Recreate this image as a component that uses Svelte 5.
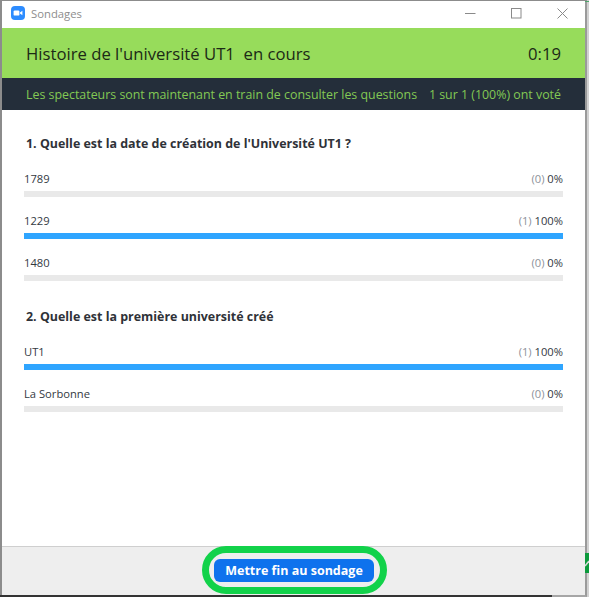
<script>
  const questions = [
    {
      title: "1. Quelle est la date de création de l'Université UT1 ?",
      answers: [
        { label: '1789', count: 0, pct: 0 },
        { label: '1229', count: 1, pct: 100 },
        { label: '1480', count: 0, pct: 0 },
      ],
    },
    {
      title: '2. Quelle est la première université créé',
      answers: [
        { label: 'UT1', count: 1, pct: 100 },
        { label: 'La Sorbonne', count: 0, pct: 0 },
      ],
    },
  ];
</script>

<div class="screen">
  <div class="window">
    <header class="titlebar">
      <svg class="logo" viewBox="0 0 14 14" aria-hidden="true">
        <rect width="14" height="14" rx="4" fill="#2d8cff" />
        <rect x="2.6" y="4.4" width="5.8" height="5.2" rx="1.2" fill="#fff" />
        <path d="M9 6.5 11.4 4.8V9.2L9 7.5Z" fill="#fff" />
      </svg>
      <span class="title">Sondages</span>
      <div class="controls">
        <svg width="11" height="11" viewBox="0 0 11 11" aria-hidden="true"><path d="M0 5.5H10.5" stroke="#8a8a8a" /></svg>
        <svg width="11" height="11" viewBox="0 0 11 11" aria-hidden="true"><rect x=".5" y=".5" width="9.5" height="9.5" fill="none" stroke="#8a8a8a" /></svg>
        <svg width="11" height="11" viewBox="0 0 11 11" aria-hidden="true"><path d="M.5.5 10.5 10.5M10.5.5 .5 10.5" stroke="#8a8a8a" /></svg>
      </div>
    </header>

    <div class="banner">
      <span>Histoire de l'université UT1&nbsp; en cours</span>
      <span>0:19</span>
    </div>

    <div class="status">
      <span>Les spectateurs sont maintenant en train de consulter les questions</span>
      <span>1 sur 1 (100%) ont voté</span>
    </div>

    <main class="results">
      {#each questions as q}
        <section class="question">
          <h2>{q.title}</h2>
          {#each q.answers as a}
            <div class="answer">
              <div class="row">
                <span>{a.label}</span>
                <span><span class="count">({a.count})</span> {a.pct}%</span>
              </div>
              <div class="track"><div class="fill" style="width: {a.pct}%"></div></div>
            </div>
          {/each}
        </section>
      {/each}
    </main>

    <footer class="footer">
      <div class="ring">
        <button type="button">Mettre fin au sondage</button>
      </div>
    </footer>
  </div>

  <!-- bits of the window behind, showing past the right edge -->
  <div class="behind-top"></div>
  <svg class="behind-side" viewBox="0 0 4 20" aria-hidden="true">
    <rect width="4" height="20" fill="#0c9a3c" />
    <path d="M0 13 4 8" stroke="#d8d8d8" stroke-width="1.6" />
  </svg>
</div>

<style>
  :global(body) {
    margin: 0;
    background: #fff;
  }

  .screen {
    position: relative;
    width: 590px;
    height: 598px;
    overflow: hidden;
    font-family: "Open Sans", "Noto Sans", sans-serif;
  }

  .window {
    position: relative;
    width: 587px;
    height: 597px;
    box-sizing: border-box;
    display: flex;
    flex-direction: column;
    background: #fff;
    border-top: 1px solid #8c8c8c;
    border-left: 2px solid #8c8c8c;
    border-right: 2px solid #9a9a9a;
    border-bottom: 2px solid #a6a6a6;
    box-shadow: 2px 0 0 #d2d2d2;
  }

  .window::after {
    content: "";
    position: absolute;
    left: -2px;
    bottom: -2px;
    width: 552px;
    height: 2px;
    background: #333;
  }

  .behind-top {
    position: absolute;
    top: 1px;
    left: 585px;
    width: 4px;
    height: 1px;
    background: #4fa56c;
  }

  .behind-side {
    position: absolute;
    top: 553px;
    left: 585px;
    width: 4px;
    height: 20px;
  }

  .titlebar {
    height: 27px;
    flex: none;
    box-sizing: border-box;
    display: flex;
    align-items: center;
    padding: 0 0 3px 9px;
    background: #fff;
  }

  .logo {
    width: 14px;
    height: 14px;
    margin-right: 6px;
  }

  .title {
    font-size: 11.3px;
    color: #8d8d8d;
  }

  .controls {
    margin-left: auto;
    margin-right: 17px;
    display: flex;
    align-items: center;
    gap: 35px;
  }

  .banner {
    height: 50px;
    flex: none;
    box-sizing: border-box;
    display: flex;
    align-items: center;
    justify-content: space-between;
    padding: 0 24px;
    background: #97dc5b;
    color: #1c2a16;
    font-size: 16.7px;
  }

  .status {
    height: 32px;
    flex: none;
    box-sizing: border-box;
    display: flex;
    align-items: center;
    justify-content: space-between;
    padding: 0 24px;
    background: #242e3a;
    color: #83c954;
    font-size: 12.4px;
    white-space: nowrap;
  }

  .results {
    flex: 1;
    padding: 25px 22px 0;
    color: #33393f;
  }

  .question {
    margin-bottom: 27px;
  }

  h2 {
    margin: 0 0 17px 2px;
    font-size: 12.45px;
    line-height: 18px;
    font-weight: 700;
    color: #2f3238;
  }

  .answer {
    margin-bottom: 15px;
  }

  .row {
    display: flex;
    justify-content: space-between;
    font-size: 11.2px;
    line-height: 18px;
    margin-bottom: 3px;
  }

  .count {
    color: #8d929a;
  }

  .track {
    height: 6px;
    background: #e9e9e9;
  }

  .fill {
    height: 100%;
    background: #2fa5ff;
  }

  .footer {
    height: 49px;
    flex: none;
    box-sizing: border-box;
    display: flex;
    justify-content: center;
    align-items: flex-start;
    background: #eeeeee;
    border-top: 1px solid #cfcfcf;
    padding-left: 2px;
  }

  .ring {
    display: flex;
    margin-top: -1px;
    padding: 6px 6px 5px 5px;
    border: 7px solid #12d24a;
    border-radius: 24px;
  }

  button {
    width: 160px;
    height: 23px;
    padding: 0;
    border: none;
    border-radius: 6px;
    background: #0e72ed;
    color: #fff;
    font: 700 12.5px "Open Sans", "Noto Sans", sans-serif;
  }
</style>
